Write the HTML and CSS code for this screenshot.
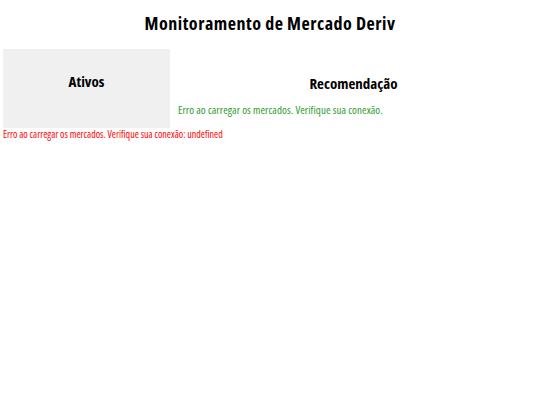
FILE: index.html
```html
<!DOCTYPE html>
<html>
<head>
<meta charset="utf-8">
<link rel="stylesheet" href="styles.css">
</head>
<body>
<h1 class="title">Monitoramento de Mercado Deriv</h1>
<div class="row">
  <div class="assets"><h2 class="heading">Ativos</h2></div>
  <div class="reco">
    <h2 class="heading">Recomendação</h2>
    <p class="ok">Erro ao carregar os mercados. Verifique sua conexão.</p>
  </div>
</div>
<p class="err">Erro ao carregar os mercados. Verifique sua conexão: undefined</p>
</body>
</html>
```
FILE: styles.css
```css
body {
  margin: 0;
  padding: 0 3px;
  font-family: "Open Sans", "DejaVu Sans", sans-serif;
  font-stretch: condensed;
  background: #fff;
  color: #000;
}
.title {
  text-align: center;
  font-size: 18px;
  line-height: 22px;
  letter-spacing: 0.5px;
  margin: 0;
  padding: 12px 0 15px;
}
.row {
  display: flex;
}
.assets {
  width: 167px;
  background: #f0f0f0;
  padding-top: 22px;
  text-align: center;
}
.heading {
  font-size: 15px;
  line-height: 20px;
  margin: 0;
}
.reco {
  flex: 1;
  padding: 24px 0 11px;
}
.reco .heading {
  text-align: center;
}
.ok {
  color: #2e9a2e;
  font-size: 11px;
  line-height: 14px;
  letter-spacing: 0.08px;
  margin: 10px 0 0 8px;
}
.err {
  color: #f00;
  font-size: 10px;
  line-height: 13px;
  margin: 0;
}
```
